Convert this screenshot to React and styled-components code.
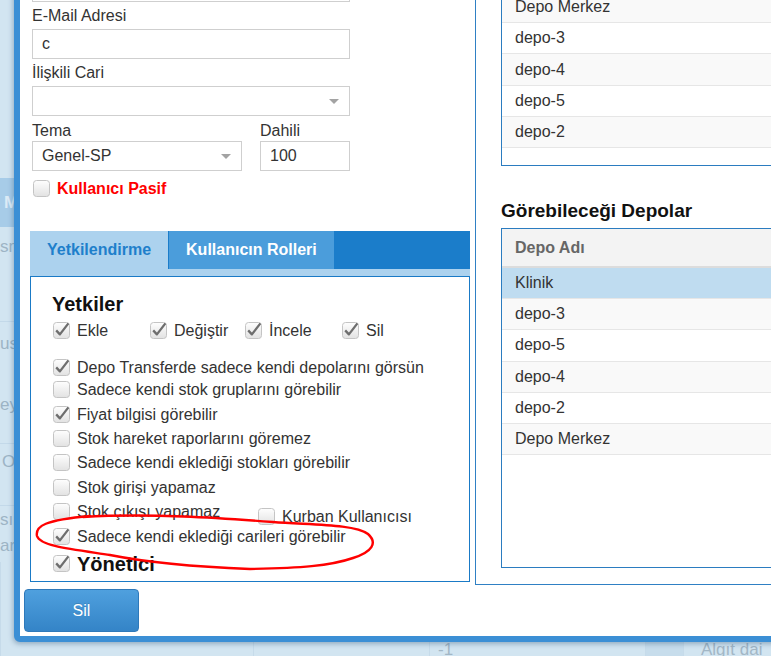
import React from 'react'
import styled, { createGlobalStyle } from 'styled-components'

const GlobalStyle = createGlobalStyle`
  html, body { margin: 0; padding: 0; }
  body { font-family: "Liberation Sans", Arial, sans-serif; background: #d2e5f1; }
  * { box-sizing: border-box; }
`

const Page = styled.div`
  position: relative;
  width: 771px;
  height: 656px;
  overflow: hidden;
  background: #d2e5f1;
`

/* faded page behind the dialog */
const Backdrop = styled.div`
  display: flex;
  flex-direction: column;
  height: 100%;
`

const BgRow = styled.div`
  flex: none;
  height: ${p => p.$h}px;
  display: flex;
  align-items: center;
  padding-left: ${p => p.$x || 0}px;
  background: ${p => (p.$head ? '#a7cce8' : 'transparent')};
  border-bottom: ${p => (p.$line ? '1px solid #c3d9e9' : 'none')};
  color: ${p => (p.$head ? '#dcebf6' : '#9db4c5')};
  font-size: 17px;
  font-weight: ${p => (p.$head ? 700 : 400)};
  white-space: nowrap;
`

const BgFoot = styled.div`
  flex: 1;
  display: grid;
  grid-template-columns: 253px 176px 216px 38px 1fr;
  align-items: end;
  color: #a2b7c6;
  font-size: 17px;
`

const BgCell = styled.div`
  height: 100%;
  display: flex;
  align-items: flex-end;
  padding: 0 0 0 ${p => p.$pad || 0}px;
  background: ${p => (p.$dark ? '#c7ddec' : 'transparent')};
  border-left: 1px solid #c6dbea;
  line-height: 20px;
  margin-bottom: -4px;
`

/* dialog */
const Modal = styled.div`
  position: absolute;
  left: 14px;
  top: -200px;
  right: -40px;
  bottom: 14px;
  display: flex;
  flex-direction: column;
  background: #fff;
  border: 6px solid #3b8fd5;
  border-radius: 6px;
  box-shadow: -1px 2px 5px rgba(30, 70, 110, 0.35);
  overflow: hidden;
`

const Body = styled.div`
  flex: 1;
  min-height: 0;
  display: grid;
  grid-template-columns: 455px 1fr;
`

const LeftCol = styled.div`
  display: flex;
  flex-direction: column;
  justify-content: flex-end;
  padding: 0 5px 3px 10px;
`

const Form = styled.div`
  display: flex;
  flex-direction: column;
  padding-left: 2px;
`

const Label = styled.div`
  font-size: 16px;
  line-height: 18px;
  color: #333;
  margin-top: ${p => (p.$mt === undefined ? 5 : p.$mt)}px;
`

const Field = styled.div`
  position: relative;
  width: ${p => p.$w}px;
  height: 30px;
  margin-top: ${p => (p.$gap === undefined ? 4 : p.$gap)}px;
  border: 1px solid #cfcfcf;
  padding-left: 9px;
  display: flex;
  align-items: center;
  font-size: 16px;
  color: #333;
  background: #fff;

  ${p =>
    p.$select &&
    `&::after {
      content: '';
      position: absolute;
      right: 10px;
      top: 12px;
      border-left: 5px solid transparent;
      border-right: 5px solid transparent;
      border-top: 5px solid #a3a3a3;
    }`}
`

const FieldRow = styled.div`
  display: flex;
  gap: 18px;
`

const FieldCol = styled.div`
  display: flex;
  flex-direction: column;
`

const PasifRow = styled.div`
  display: flex;
  align-items: center;
  gap: 7px;
  height: 17px;
  margin-top: 9px;
  padding-left: 1px;
  color: #f00;
  font-weight: 700;
  font-size: 16px;
`

const TabBar = styled.div`
  margin-top: 34px;
  height: 45px;
  display: flex;
  background: #1b7dca;
  border-bottom: 7px solid #acd2ee;
`

const Tab = styled.div`
  display: flex;
  align-items: center;
  padding: 0 17px;
  margin-left: ${p => (p.$active ? 0 : 1)}px;
  font-size: 16px;
  font-weight: 700;
  background: ${p => (p.$active ? '#acd2ee' : '#4b9ddb')};
  color: ${p => (p.$active ? '#1e7fcb' : '#fff')};
`

const Panel = styled.div`
  height: 306px;
  border: 1px solid #1a7ac6;
  padding: 16px 10px 0 21px;
  display: flex;
  flex-direction: column;
`

const Title = styled.div`
  font-size: ${p => p.$size || 20}px;
  line-height: 22px;
  font-weight: 700;
  color: #111;
`

const PermRow = styled.div`
  margin-top: 7px;
  height: 17px;
  display: grid;
  grid-template-columns: 97px 95px 97px auto;
`

const CheckLabel = styled.div`
  display: flex;
  align-items: center;
  gap: 7px;
  padding-left: 1px;
  font-size: 16px;
  line-height: 17px;
  color: #333;
  white-space: nowrap;
  flex: ${p => (p.$w ? `0 0 ${p.$w}px` : 'none')};
  margin-top: ${p => p.$mt || 0}px;
`

const List = styled.div`
  margin-top: 18px;
  display: flex;
  flex-direction: column;
`

const ListItem = styled.div`
  height: ${p => p.$h || 24.4}px;
  display: flex;
  align-items: center;
`

const RightCol = styled.div`
  display: flex;
  flex-direction: column;
  justify-content: flex-end;
  border-left: 1px solid #2f80c4;
  border-bottom: 1px solid #2f80c4;
  padding: 0 0 16px 25px;
`

const Table = styled.div`
  display: flex;
  flex-direction: column;
  border: 1px solid #2b7cc0;
  height: ${p => (p.$h ? `${p.$h}px` : 'auto')};
  padding-bottom: ${p => p.$pb || 0}px;
  background: #fff;
`

const THead = styled.div`
  flex: none;
  height: 39px;
  display: flex;
  align-items: center;
  padding-left: 13px;
  background: #f3f3f3;
  border-bottom: 2px solid #dcdcdc;
  color: #666;
  font-weight: 700;
  font-size: 16px;
`

const TRow = styled.div`
  flex: none;
  height: 31.2px;
  display: flex;
  align-items: center;
  padding-left: 13px;
  border-bottom: 1px solid #e6e6e6;
  font-size: 16px;
  color: #333;
  background: ${p => (p.$selected ? '#bfdcf0' : p.$odd ? '#f9f9f9' : '#fff')};
`

const Heading = styled.div`
  margin: 34px 0 6px;
  font-size: 19px;
  line-height: 22px;
  font-weight: 700;
  color: #111;
`

const Footer = styled.div`
  flex: none;
  padding: 4px 0 4px 4px;
`

const Button = styled.button`
  width: 115px;
  height: 43px;
  border: 1px solid #2e79ba;
  border-radius: 4px;
  background: linear-gradient(#4fa0de, #3484c7);
  color: #fff;
  font-family: "Liberation Sans", Arial, sans-serif;
  font-size: 16px;
  text-shadow: 0 -1px 0 rgba(0, 0, 0, 0.15);
`

const Annotation = styled.svg`
  position: absolute;
  left: 0;
  top: 0;
  pointer-events: none;
`

const BoxSvg = styled.svg`
  flex: none;
`

const CheckBox = ({ checked }) => (
  <BoxSvg width="17" height="17" viewBox="0 0 17 17">
    <defs>
      <linearGradient id="cbFill" x1="0" y1="0" x2="0" y2="1">
        <stop offset="0" stopColor="#fefefe" />
        <stop offset="1" stopColor="#e2e2e2" />
      </linearGradient>
    </defs>
    <rect x="0.5" y="0.5" width="16" height="16" rx="3" fill="url(#cbFill)" stroke="#c4c4c4" />
    {checked && (
      <path d="M3.2 8.4 L6.9 12.4 L15.4 1.4" fill="none" stroke="#6e6e6e" strokeWidth="2.3" strokeLinejoin="round" />
    )}
  </BoxSvg>
)

const Check = ({ checked, children, ...rest }) => (
  <CheckLabel {...rest}>
    <CheckBox checked={checked} />
    <span>{children}</span>
  </CheckLabel>
)

const topDepots = ['Klinik', 'Depo Merkez', 'depo-3', 'depo-4', 'depo-5', 'depo-2']
const visibleDepots = ['Klinik', 'depo-3', 'depo-5', 'depo-4', 'depo-2', 'Depo Merkez']

const bgRows = [
  { h: 178 },
  { h: 49, head: true, text: 'M', x: 4 },
  { h: 40, text: 'sm', x: -3 },
  { h: 55, line: true },
  { h: 44, text: 'us', x: -3 },
  { h: 78, text: 'ey', x: -2, line: true },
  { h: 36, text: 'O', x: 2 },
  { h: 26, line: true },
  { h: 28, text: 'sın', x: -4 },
  { h: 24, text: 'ar', x: -2 },
]

export default function App() {
  return (
    <Page>
      <GlobalStyle />
      <Backdrop>
        {bgRows.map((r, i) => (
          <BgRow key={i} $h={r.h} $head={r.head} $line={r.line} $x={r.x}>
            {r.text}
          </BgRow>
        ))}
        <BgFoot>
          <BgCell />
          <BgCell />
          <BgCell $pad={8}>-1</BgCell>
          <BgCell $dark />
          <BgCell $pad={17}>Algıt  dai</BgCell>
        </BgFoot>
      </Backdrop>

      <Modal>
        <Body>
          <LeftCol>
            <Form>
              <Label $mt={0}>Kullanıcı Adı</Label>
              <Field $w={318} />
              <Label>E-Mail Adresi</Label>
              <Field $w={318}>c</Field>
              <Label>İlişkili Cari</Label>
              <Field $w={318} $select />
              <FieldRow>
                <FieldCol>
                  <Label $mt={6}>Tema</Label>
                  <Field $w={210} $gap={1} $select>Genel-SP</Field>
                </FieldCol>
                <FieldCol>
                  <Label $mt={6}>Dahili</Label>
                  <Field $w={90} $gap={1}>100</Field>
                </FieldCol>
              </FieldRow>
              <PasifRow>
                <CheckBox />
                <span>Kullanıcı Pasif</span>
              </PasifRow>
            </Form>

            <TabBar>
              <Tab $active>Yetkilendirme</Tab>
              <Tab>Kullanıcın Rolleri</Tab>
            </TabBar>
            <Panel>
              <Title>Yetkiler</Title>
              <PermRow>
                <Check checked>Ekle</Check>
                <Check checked>Değiştir</Check>
                <Check checked>İncele</Check>
                <Check checked>Sil</Check>
              </PermRow>
              <List>
                <ListItem $h={20.5}>
                  <Check checked>Depo Transferde sadece kendi depolarını görsün</Check>
                </ListItem>
                <ListItem>
                  <Check>Sadece kendi stok gruplarını görebilir</Check>
                </ListItem>
                <ListItem>
                  <Check checked>Fiyat bilgisi görebilir</Check>
                </ListItem>
                <ListItem>
                  <Check>Stok hareket raporlarını göremez</Check>
                </ListItem>
                <ListItem>
                  <Check>Sadece kendi eklediği stokları görebilir</Check>
                </ListItem>
                <ListItem>
                  <Check>Stok girişi yapamaz</Check>
                </ListItem>
                <ListItem>
                  <Check $w={205}>Stok çıkışı yapamaz</Check>
                  <Check $mt={10}>Kurban Kullanıcısı</Check>
                </ListItem>
                <ListItem>
                  <Check checked>Sadece kendi eklediği carileri görebilir</Check>
                </ListItem>
                <ListItem>
                  <CheckLabel $mt={7}>
                    <CheckBox checked />
                    <Title $size={20}>Yönetici</Title>
                  </CheckLabel>
                </ListItem>
              </List>
            </Panel>
          </LeftCol>

          <RightCol>
            <Table $pb={17}>
              <THead>Depo Adı</THead>
              {topDepots.map((d, i) => (
                <TRow key={d} $odd={i % 2 === 1}>{d}</TRow>
              ))}
            </Table>
            <Heading>Görebileceği Depolar</Heading>
            <Table $h={340}>
              <THead>Depo Adı</THead>
              {visibleDepots.map((d, i) => (
                <TRow key={d} $selected={i === 0} $odd={i % 2 === 1}>{d}</TRow>
              ))}
            </Table>
          </RightCol>
        </Body>
        <Footer>
          <Button>Sil</Button>
        </Footer>
      </Modal>

      <Annotation width="771" height="656" viewBox="0 0 771 656">
        <path
          d="M83 517 C150 513, 220 518, 273 522 C310 525, 355 524, 368 534 C378 543, 372 552, 353 558 C330 566, 300 568, 250 569 C200 567, 150 563, 110 555 C70 549, 40 546, 37 536 C35 526, 45 520, 90 516"
          fill="none"
          stroke="#f00"
          strokeWidth="2.4"
          strokeLinecap="round"
        />
      </Annotation>
    </Page>
  )
}
